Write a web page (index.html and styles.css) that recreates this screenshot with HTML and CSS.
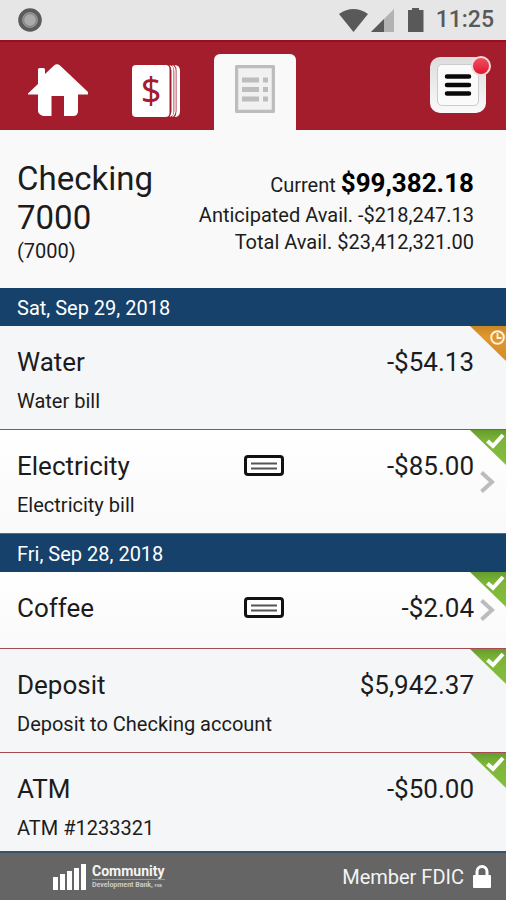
FILE: index.html
```html
<!DOCTYPE html>
<html lang="en">
<head>
<meta charset="utf-8">
<meta name="viewport" content="width=device-width, initial-scale=1">
<title>Checking 7000</title>
<link rel="stylesheet" href="styles.css">
</head>
<body>
<svg class="defs" aria-hidden="true">
  <defs>
    <linearGradient id="green" x1="0" y1="0" x2="0" y2="1"><stop offset="0" stop-color="#659c2d"/><stop offset=".3" stop-color="#7cb537"/><stop offset="1" stop-color="#86bd40"/></linearGradient>
    <linearGradient id="orange" x1="0" y1="0" x2="0" y2="1"><stop offset="0" stop-color="#c88625"/><stop offset=".3" stop-color="#e3972b"/><stop offset="1" stop-color="#d48c2a"/></linearGradient>
    <symbol id="cleared" viewBox="0 0 36 36"><path d="M0 0H36V35Z" fill="url(#green)"/><path d="M17.500 11l5.500 5 10-11" fill="none" stroke="#fff" stroke-width="4"/></symbol>
    <symbol id="pending" viewBox="0 0 36 36"><path d="M0 0H36V35Z" fill="url(#orange)"/><circle cx="27.500" cy="11.500" r="6.300" fill="none" stroke="#fff2df" stroke-width="2"/><path d="M27.500 7v5h4" fill="none" stroke="#fff2df" stroke-width="1.800"/></symbol>
    <symbol id="check" viewBox="0 0 40 22"><rect x="1.500" y="1.500" width="37" height="18" rx="2.500" fill="#fff" stroke="#111" stroke-width="3"/><path d="M7 8.500h26M7 13.500h26" stroke="#555" stroke-width="2"/></symbol>
    <symbol id="chevron" viewBox="0 0 15 24"><path d="M1.500 2.500l10.500 9.500L1.500 21.500" fill="none" stroke="#bcbcbc" stroke-width="4"/></symbol>
  </defs>
</svg>
<div class="app">
  <div class="status">
    <svg class="spinner" viewBox="0 0 24 24" aria-hidden="true"><circle cx="12" cy="12" r="9.800" fill="#aaa" stroke="#5b5b5b" stroke-width="4"/><circle cx="12" cy="12" r="6.500" fill="none" stroke="#888" stroke-width="1.500"/></svg>
    <svg class="signals" viewBox="0 0 86 26" aria-hidden="true">
      <path d="M0 7Q14.500-3 29 7L14.500 25Z" fill="#595959"/>
      <path d="M32 25L55 2V25Z" fill="#b2b2b2"/><path d="M32 25L45 12V25Z" fill="#595959"/>
      <path d="M69 3h4V1h7v2h4.500V25H69Z" fill="#595959"/>
    </svg>
    <span class="clock">11:25</span>
  </div>
  <nav class="tabs">
    <button class="tab home" aria-label="Home">
      <svg viewBox="0 0 60 54"><path d="M0 29.500L10 20V5.500q0-1.500 1.500-1.500h4q1.500 0 1.500 1.500V10L26 1.500q3-2.500 6 0L60 28v2.500H50V47q0 5-5 5h-9V32H23.500V52H15q-5-2-5-5V30.500H0Z" fill="#fff"/></svg>
    </button>
    <button class="tab accounts" aria-label="Accounts">
      <svg viewBox="0 0 48 52"><rect width="37.500" height="52" rx="4" fill="#fff"/><path d="M37.500 0q4 1 4 5v42q0 4-4 5 2-3 2-6V6q0-3-2-6ZM42.500 0q5.500 0 5.500 6v40q0 6-5.500 6 2-2 2-6V6q0-4-2-6Z" fill="#fff"/><path d="M40.500 .5q2.500 2 2.500 5.500v40q0 3.500-2.500 5.500" fill="none" stroke="#fff" stroke-width="1.400"/><text class="dollar" x="19" y="38" text-anchor="middle">$</text></svg>
    </button>
    <button class="tab active" aria-label="Transactions" aria-current="page">
      <svg viewBox="0 0 40 48"><rect x="1.500" y="1.500" width="37" height="45" rx="1" fill="#f1f1f1" stroke="#bdbdbd" stroke-width="3.500"/><path d="M7 15h17M7 24.500h17M7 34h17" stroke="#bdbdbd" stroke-width="5"/><path d="M28 15h5M28 24.500h5M28 34h5" stroke="#bdbdbd" stroke-width="5"/></svg>
    </button>
    <button class="menu" aria-label="Menu, new notification">
      <span class="menu-face"><svg viewBox="0 0 28 24"><path d="M3 3.500h22M3 12h22M3 20.500h22" stroke="#080808" stroke-width="4.500" stroke-linecap="round"/></svg></span>
      <span class="badge"></span>
    </button>
  </nav>
  <header class="account">
    <div class="account-name">
      <h1>Checking 7000</h1>
      <p>(7000)</p>
    </div>
    <div class="balances">
      <p class="current">Current <strong>$99,382.18</strong></p>
      <p>Anticipated Avail. -$218,247.13</p>
      <p>Total Avail. $23,412,321.00</p>
    </div>
  </header>
  <main>
    <h2>Sat, Sep 29, 2018</h2>
    <ul>
      <li class="item tinted">
        <span class="name">Water</span><span class="amount">-$54.13</span>
        <span class="desc">Water bill</span>
        <svg class="corner" role="img" aria-label="Pending"><use href="#pending"/></svg>
      </li>
      <li class="item linked">
        <span class="name">Electricity</span><svg class="check" aria-hidden="true"><use href="#check"/></svg><span class="amount">-$85.00</span>
        <span class="desc">Electricity bill</span>
        <svg class="corner" role="img" aria-label="Cleared"><use href="#cleared"/></svg>
        <svg class="chevron" aria-hidden="true"><use href="#chevron"/></svg>
      </li>
    </ul>
    <h2>Fri, Sep 28, 2018</h2>
    <ul>
      <li class="item linked">
        <span class="name">Coffee</span><svg class="check" aria-hidden="true"><use href="#check"/></svg><span class="amount">-$2.04</span>
        <svg class="corner" role="img" aria-label="Cleared"><use href="#cleared"/></svg>
        <svg class="chevron" aria-hidden="true"><use href="#chevron"/></svg>
      </li>
      <li class="item tinted">
        <span class="name">Deposit</span><span class="amount">$5,942.37</span>
        <span class="desc">Deposit to Checking account</span>
        <svg class="corner" role="img" aria-label="Cleared"><use href="#cleared"/></svg>
      </li>
      <li class="item tinted last">
        <span class="name">ATM</span><span class="amount">-$50.00</span>
        <span class="desc">ATM #1233321</span>
        <svg class="corner" role="img" aria-label="Cleared"><use href="#cleared"/></svg>
      </li>
    </ul>
  </main>
  <footer>
    <div class="brand">
      <svg class="bars" viewBox="0 0 34 28" aria-hidden="true"><path d="M0 14h5v13H0ZM7 11h5v16H7ZM14 8h5v19h-5ZM21 5h5v22h-5ZM28 1h5v26h-5Z" fill="#fff"/></svg>
      <div class="brand-text"><span class="brand-name">Community</span><span class="brand-sub">Development Bank, <small>FSB</small></span></div>
    </div>
    <div class="fdic">Member FDIC
      <svg viewBox="0 0 18 24" aria-hidden="true"><path d="M4 11V6.500a5 5 0 0 1 10 0V11" fill="none" stroke="#fff" stroke-width="3"/><rect y="10" width="18" height="13" rx="1" fill="#fff"/></svg>
    </div>
  </footer>
</div>
</body>
</html>
```
FILE: styles.css
```css
* { box-sizing: border-box; }
body { margin: 0; background: #f9f9f9; color: #1c1c1c; font-family: Roboto, "Liberation Sans", sans-serif; font-size: 20px; }
h1, h2, p, ul { margin: 0; padding: 0; font-weight: 400; }
ul { list-style: none; }
button { padding: 0; border: 0; background: none; font: inherit; }
svg { display: block; }
.defs { position: absolute; width: 0; height: 0; }
.app { display: flex; flex-direction: column; min-height: 100vh; }

.status { display: flex; align-items: center; height: 40px; padding: 0 12px 0 18px; background: #e6e6e6; }
.spinner { width: 24px; height: 24px; }
.signals { width: 86px; height: 26px; margin-left: auto; }
.clock { margin-left: 11px; color: #595959; font-size: 23px; font-weight: 500; line-height: 28px; }

.tabs { display: flex; align-items: flex-end; height: 90px; padding: 0 16px 0 20px; background: #a31d2c; border-top: 2px solid #980d21; }
.tab { display: flex; justify-content: center; align-items: center; height: 76px; padding-bottom: 3px; }
.home { width: 76px; }
.home svg { width: 60px; height: 54px; }
.accounts { width: 118px; padding-left: 2px; }
.accounts svg { width: 48px; height: 52px; }
.dollar { fill: #a31d2c; font-family: "Noto Sans", sans-serif; font-size: 36px; }
.active { width: 82px; background: #f9f9f9; border-radius: 6px 6px 0 0; padding-bottom: 6px; }
.active svg { width: 40px; height: 48px; }
.menu { position: relative; width: 56px; height: 56px; margin: 0 4px 17px auto; padding: 7px; border-radius: 10px; background: linear-gradient(#dcdcdc, #fafafa); }
.menu-face { display: flex; justify-content: center; align-items: center; height: 42px; border: 1px solid #ccc; border-radius: 5px; background: #fafafa; }
.menu-face svg { width: 28px; height: 24px; }
.badge { position: absolute; top: -1px; right: -5px; width: 20px; height: 20px; border: 2px solid #f5dada; border-radius: 50%; background: linear-gradient(#ed5260, #df1730); }

.account { display: flex; justify-content: space-between; align-items: flex-start; padding: 29px 32px 23px 17px; background: #f9f9f9; }
.account-name { width: 160px; }
h1 { font-size: 33px; line-height: 39px; }
.account-name p { line-height: 28px; }
.balances { padding-top: 8px; text-align: right; white-space: nowrap; line-height: 27px; }
.current { line-height: 33px; }
.current strong { color: #000; font-size: 26px; }

h2 { height: 38px; padding-left: 17px; background: #16416a; color: #fff; font-size: 20px; line-height: 41px; }
.item { position: relative; display: grid; grid-template-columns: 6fr 40px 5fr; align-content: start; padding: 18px 32px 14px 17px; min-height: 77px; border-bottom: 1px solid #a44a50; background: linear-gradient(#fff, #f9f9f9); }
.tinted { background: #f5f6f8; }
.last { padding-bottom: 9px; border-bottom: 0; }
.name, .amount { font-size: 26px; line-height: 36px; }
.amount { grid-column: 3; text-align: right; }
.check { align-self: center; width: 40px; height: 22px; }
.desc { grid-column: 1 / -1; margin-top: 7px; line-height: 28px; }
.corner { position: absolute; top: 0; right: 0; width: 36px; height: 36px; }
.chevron { position: absolute; top: 50%; right: 11px; width: 15px; height: 24px; margin-top: -12px; }

footer { display: flex; flex: 1; justify-content: space-between; align-items: center; min-height: 49px; padding: 0 15px 0 53px; border-top: 2px solid #3a5268; background: #656565; color: #f4f4f4; }
.brand { display: flex; align-items: center; gap: 5px; }
.bars { width: 34px; height: 28px; }
.brand-text { display: flex; flex-direction: column; font-weight: 700; }
.brand-name { border-bottom: 1px solid #999; font-size: 14px; line-height: 16px; }
.brand-sub { color: #ccc; font-size: 7px; line-height: 11px; }
.brand-sub small { font-size: 4px; }
.fdic { display: flex; align-items: center; gap: 9px; }
.fdic svg { width: 18px; height: 24px; }
```
